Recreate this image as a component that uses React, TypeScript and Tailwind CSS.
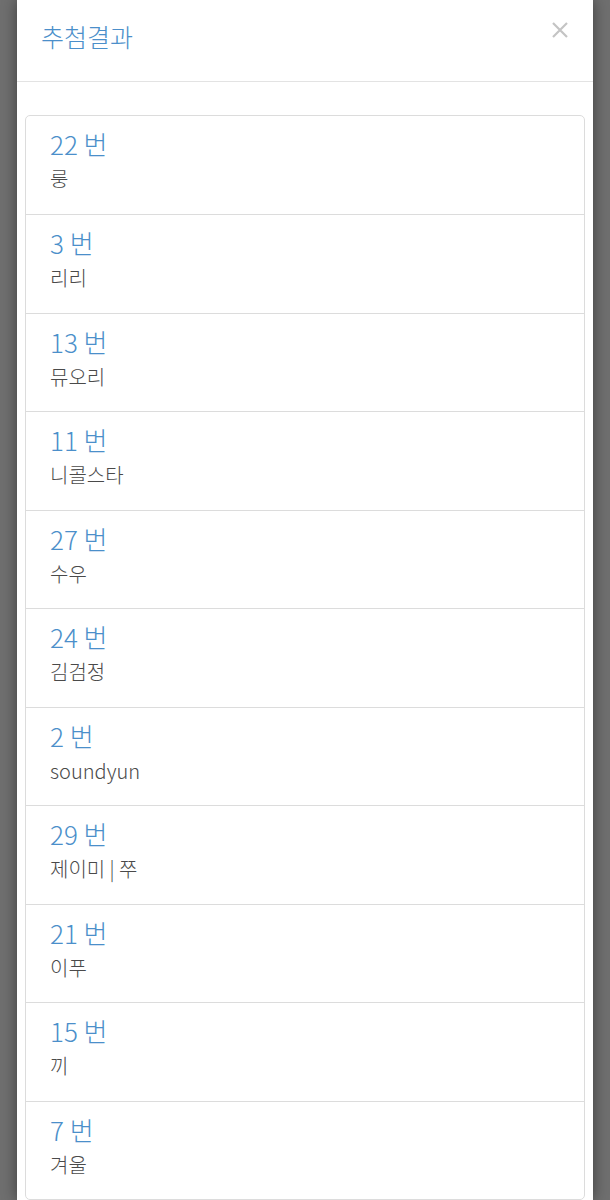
import React from "react";

const items: [string, string][] = [
  ["22 번", "룽"],
  ["3 번", "리리"],
  ["13 번", "뮤오리"],
  ["11 번", "니콜스타"],
  ["27 번", "수우"],
  ["24 번", "김검정"],
  ["2 번", "soundyun"],
  ["29 번", "제이미 | 쭈"],
  ["21 번", "이푸"],
  ["15 번", "끼"],
  ["7 번", "겨울"],
];

export default function App() {
  return (
    <div
      className="w-[610px] h-[1200px] overflow-hidden bg-[#6f6f6f] flex justify-center antialiased"
      style={{ fontFamily: '"Noto Sans CJK KR", "Noto Sans", sans-serif' }}
    >
      <div className="w-[576px] h-[1200px] bg-white shadow-[0_0_14px_rgba(0,0,0,0.45)] flex flex-col">
        <div className="h-[82px] border-b border-[#e3e3e3] flex items-start justify-between pl-[24px] pr-[24px]">
          <div className="text-[25px] font-light leading-none text-[#4b8fca] mt-[24px]">추첨결과</div>
          <svg width="18" height="18" viewBox="0 0 18 18" className="mt-[21px]">
            <path d="M2 2 L16 16 M16 2 L2 16" stroke="#c4c4c4" strokeWidth="2.2" />
          </svg>
        </div>
        <div className="px-[8px] pt-[33px]">
          <div className="border border-[#dcdcdc] rounded-[5px]">
            {items.map(([num, name], i) => (
              <div
                key={i}
                className={`h-[98.5px] pl-[24px] flex flex-col ${i > 0 ? "border-t border-[#dcdcdc]" : ""}`}
              >
                <div className="text-[26px] font-light leading-none text-[#4b8fca] mt-[15px]">{num}</div>
                <div className="text-[20px] font-light leading-none text-[#4a4a4a] mt-[12px]">{name}</div>
              </div>
            ))}
          </div>
        </div>
      </div>
    </div>
  );
}
